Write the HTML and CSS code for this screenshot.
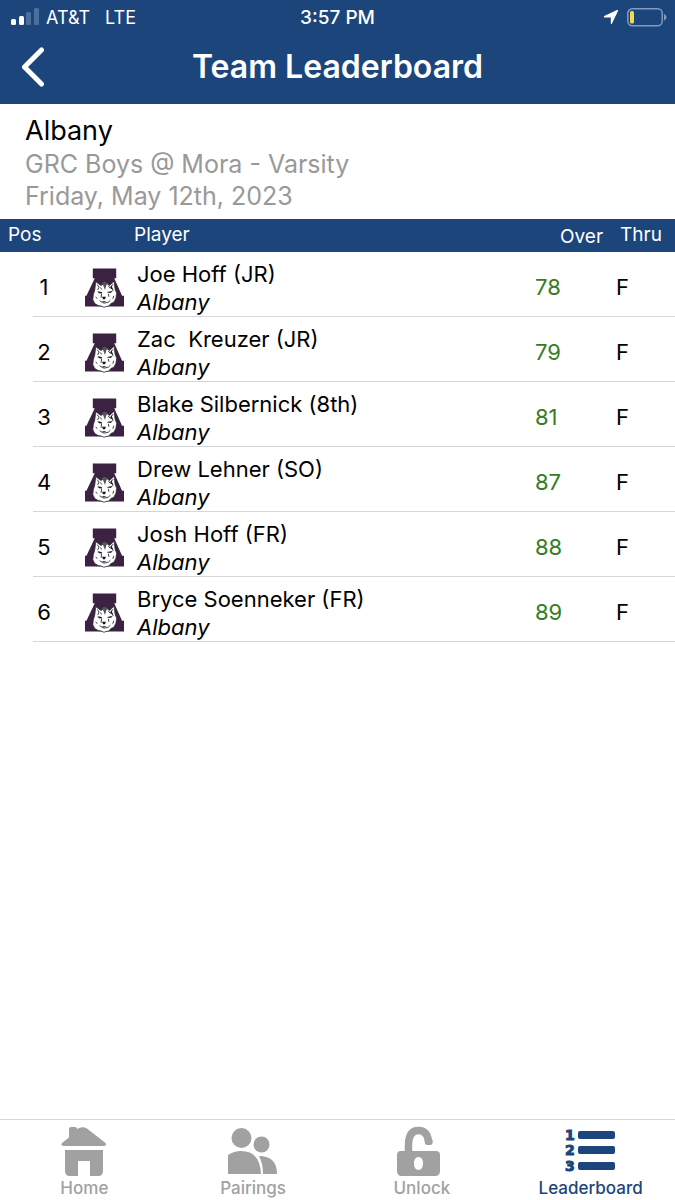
FILE: index.html
```html
<!DOCTYPE html>
<html lang="en">
<head>
<meta charset="utf-8">
<meta name="viewport" content="width=device-width, initial-scale=1">
<title>Team Leaderboard</title>
<link rel="stylesheet" href="styles.css">
</head>
<body>
<svg class="defs" aria-hidden="true">
  <symbol id="husky" viewBox="0 0 40 40">
    <path fill="#3b2142" d="M8 0h24v10h-2l8 18h2v11H0V28h1.500L10 10H8z"/>
    <path fill="#fff" stroke="#2a2630" stroke-width=".8" d="M11 13.500l5.500 4 2.500-2h3.500l2.500 2 5-4.500.8 8 1.700 4.500-.8 5-2 4-3.200 1.500-2 2.500-3 .5-2 .8-3-1.300-3-.5-3.500-2-2-4 .5-5 1.500-5z"/>
    <path fill="#555" d="M17 15l3-1.500 3.500 1.500-1.500 2-1.500 5-2-5z"/>
    <path fill="none" stroke="#252228" stroke-width=".9" d="M12.500 16.500l2 2.500-1.500 3M29 16l-2.500 3 2.500 4M13 24l4 .5M23 24.500l5-1M17 26l-.5 4M24 26l.5 3M15 33l3 2 2 .5 4-1 2-2M11 29l1.500 2M29.500 28l-1 3M24 18l2 2.500M16 19.500l1 2"/>
    <path fill="#17151a" d="M17.500 29h4l-1 2.500h-2zM13.500 23.500l4 1v1.200l-3-.3zM23 25l4-1.500v1.400zM17 33.500h5l-2.500 1.300zM27 17l2 5-3-2z"/>
  </symbol>
</svg>
<div class="app">
  <header class="top">
    <div class="status">
      <div class="carrier">
        <svg class="signal" viewBox="0 0 28 18" aria-hidden="true"><rect y="11" width="5" height="6" rx="1.500" fill="#fff"/><rect x="8" y="8" width="5" height="9" rx="1.500" fill="#fff"/><rect x="15" y="4" width="5" height="13" rx="1.500" fill="#4c6f9d"/><rect x="23" width="5" height="17" rx="1.500" fill="#4c6f9d"/></svg>
        <span>AT&amp;T</span><span class="network">LTE</span>
      </div>
      <span class="time">3:57 PM</span>
      <div class="indicators">
        <svg class="location" viewBox="0 0 16 16" aria-hidden="true"><path fill="#fff" d="M1.200 7L14 1q1.500-.4 1 1L9 14.500q-.8 1-1.200 0V8.500H1.500Q0 8 1.200 7z"/></svg>
        <svg class="battery" viewBox="0 0 40 19" aria-hidden="true"><rect x=".8" y=".8" width="34.400" height="17" rx="4.500" fill="none" stroke="#7f9bc0" stroke-width="1.500"/><rect x="3" y="3" width="4" height="12.500" rx="1.500" fill="#f6d94a"/><path d="M37 6q2.500 1 2.500 3.300T37 12.600z" fill="#7f9bc0"/></svg>
      </div>
    </div>
    <div class="titlebar">
      <button class="back" type="button" aria-label="Back"><svg viewBox="0 0 24 40" aria-hidden="true"><path d="M20.500 3L3.500 20l17 17" fill="none" stroke="#fff" stroke-width="5" stroke-linecap="round" stroke-linejoin="round"/></svg></button>
      <h1>Team Leaderboard</h1>
    </div>
  </header>
  <section class="event">
    <h2>Albany</h2>
    <p>GRC Boys @ Mora - Varsity</p>
    <p>Friday, May 12th, 2023</p>
  </section>
  <main>
    <table class="board">
      <thead><tr><th class="pos" scope="col">Pos</th><th class="player" scope="col">Player</th><th class="over" scope="col">Over</th><th class="thru" scope="col">Thru</th></tr></thead>
      <tbody>
        <tr><td class="pos">1</td><td><div class="golfer"><svg class="logo" aria-hidden="true"><use href="#husky"/></svg><div><div>Joe Hoff (JR)</div><em>Albany</em></div></div></td><td class="over">78</td><td class="thru">F</td></tr>
        <tr><td class="pos">2</td><td><div class="golfer"><svg class="logo" aria-hidden="true"><use href="#husky"/></svg><div><div>Zac&nbsp; Kreuzer (JR)</div><em>Albany</em></div></div></td><td class="over">79</td><td class="thru">F</td></tr>
        <tr><td class="pos">3</td><td><div class="golfer"><svg class="logo" aria-hidden="true"><use href="#husky"/></svg><div><div>Blake Silbernick (8th)</div><em>Albany</em></div></div></td><td class="over">81</td><td class="thru">F</td></tr>
        <tr><td class="pos">4</td><td><div class="golfer"><svg class="logo" aria-hidden="true"><use href="#husky"/></svg><div><div>Drew Lehner (SO)</div><em>Albany</em></div></div></td><td class="over">87</td><td class="thru">F</td></tr>
        <tr><td class="pos">5</td><td><div class="golfer"><svg class="logo" aria-hidden="true"><use href="#husky"/></svg><div><div>Josh Hoff (FR)</div><em>Albany</em></div></div></td><td class="over">88</td><td class="thru">F</td></tr>
        <tr><td class="pos">6</td><td><div class="golfer"><svg class="logo" aria-hidden="true"><use href="#husky"/></svg><div><div>Bryce Soenneker (FR)</div><em>Albany</em></div></div></td><td class="over">89</td><td class="thru">F</td></tr>
      </tbody>
    </table>
  </main>
  <nav class="tabs" aria-label="Main">
    <a href="#home"><svg viewBox="0 0 50 50" aria-hidden="true"><path fill="currentColor" d="M10 1.500Q10 0 12 0h4q2 0 2 1.500V2Q23-1 28 1.500L46.500 16Q48 18.500 45 19H5Q1 18.500 3 16l7-5.500zM6 23h38v21q0 5-5 5h-8V34H19v15h-8q-5 0-5-5z"/></svg><span>Home</span></a>
    <a href="#pairings"><svg viewBox="0 0 50 50" aria-hidden="true"><g fill="currentColor"><circle cx="13.500" cy="11" r="10"/><circle cx="33.500" cy="17.500" r="8"/><path d="M0 47V28q6-4 13-4 19 0 20 23zM31 29q18 0 18 18H35q0-10-4-18z"/></g></svg><span>Pairings</span></a>
    <a href="#unlock"><svg viewBox="0 0 50 50" aria-hidden="true"><path fill="none" stroke="currentColor" stroke-width="7.500" d="M11.500 28V17Q12 3.500 21.500 3.500 30 3.500 31.500 14"/><path fill="currentColor" d="M27.700 13h8v2q0 3-2.500 3h-3q-2.500 0-2.500-3z"/><path fill="currentColor" fill-rule="evenodd" d="M4 24h35q4 0 4 4v16q0 5-5 5H5q-5 0-5-5V28q0-4 4-4zM21.500 30q-4.500 0-4.500 6.500t4.500 6.500 4.500-6.500-4.500-6.500z"/></svg><span>Unlock</span></a>
    <a class="active" href="#leaderboard" aria-current="page"><svg viewBox="0 0 50 50" aria-hidden="true"><g fill="currentColor"><rect x="12" y="4" width="37" height="8" rx="2"/><rect x="12" y="19" width="37" height="8" rx="2"/><rect x="12" y="35" width="37" height="8" rx="2"/><g class="digits"><text x="-1" y="13">1</text><text x="-1" y="28">2</text><text x="-1" y="44">3</text></g></g></svg><span>Leaderboard</span></a>
  </nav>
</div>
</body>
</html>
```
FILE: styles.css
```css
* { box-sizing: border-box; }
body {
  margin: 0;
  background: #fff;
  color: #000;
  font-family: Inter, "Liberation Sans", sans-serif;
  font-size: 22px;
}
h1, h2, p { margin: 0; font-weight: 400; }
.defs { display: none; }
.app { display: flex; flex-direction: column; min-height: 100vh; }

.top { background: #1c457c; color: #fff; padding-bottom: 4px; }
.status {
  display: grid;
  grid-template-columns: 1fr auto 1fr;
  align-items: center;
  height: 34px;
  padding: 0 8px;
  font-size: 18px;
}
.carrier { display: flex; align-items: center; gap: 7px; padding-left: 3px; }
.network { margin-left: 8px; }
.signal { width: 28px; height: 18px; }
.time { font-size: 19px; font-weight: 500; }
.indicators { display: flex; justify-content: flex-end; align-items: center; gap: 8px; }
.location { width: 16px; height: 16px; }
.battery { width: 40px; height: 19px; }
.titlebar {
  display: grid;
  grid-template-columns: 56px 1fr 56px;
  align-items: center;
  height: 66px;
}
.titlebar h1 { font-size: 32px; font-weight: 600; text-align: center; line-height: 40px; }
.back { background: none; border: 0; padding: 0 0 0 21px; height: 48px; display: flex; align-items: center; }
.back svg { width: 24px; height: 40px; }

.event { padding: 10px 25px 7px; color: #999; font-size: 25px; line-height: 32px; }
.event h2 { color: #000; font-size: 27px; line-height: 34px; }

.board { width: 100%; border-collapse: collapse; table-layout: fixed; }
.board th, .board td { padding: 0; text-align: left; font-weight: 400; }
.board thead { background: #1c457c; color: #fff; font-size: 19px; }
.board th { height: 33px; line-height: 32px; vertical-align: top; }
.board th.pos { width: 85px; padding-left: 8px; }
.board th.player { padding-left: 49px; }
.board th.over { width: 81px; padding: 2px 0 0 25px; line-height: 31px; }
.board th.thru { width: 59px; padding-left: 4px; }
.board tbody tr { height: 65px; background: linear-gradient(#d6d6d8, #d6d6d8) 33px 100% / 100% 1px no-repeat; }
.board td.pos { padding: 5px 0 0 3px; text-align: center; }
.board td.over, .board td.thru { padding-top: 5px; }
.board td.over { color: #357d22; }
.golfer { display: flex; align-items: center; gap: 13px; padding-top: 6px; line-height: 28px; }
.golfer em { display: block; }
.logo { width: 39px; height: 40px; }

.tabs {
  display: grid;
  grid-template-columns: repeat(4, 1fr);
  margin-top: auto;
  height: 81px;
  padding-top: 7px;
  border-top: 1px solid #d6d6d6;
}
.tabs a {
  display: flex;
  flex-direction: column;
  align-items: center;
  color: #a1a1a1;
  font-size: 17px;
  font-weight: 500;
  line-height: 22px;
  text-decoration: none;
}
.tabs a.active { color: #1c457c; }
.tabs svg { width: 50px; height: 50px; overflow: visible; }
.digits { font: bold 14px "DejaVu Sans", sans-serif; stroke: currentColor; stroke-width: 1px; }
```
